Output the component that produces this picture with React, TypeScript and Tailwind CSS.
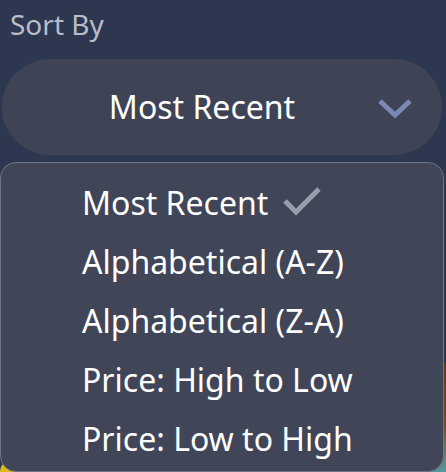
import { useState } from 'react';

const options = [
  'Most Recent',
  'Alphabetical (A-Z)',
  'Alphabetical (Z-A)',
  'Price: High to Low',
  'Price: Low to High',
];

function ChevronDown() {
  return (
    <svg width="36" height="22" viewBox="0 0 36 22" fill="none">
      <path d="M3 4 L18 18 L33 4" stroke="#7b87b4" strokeWidth="5" strokeLinejoin="miter" />
    </svg>
  );
}

function Check() {
  return (
    <svg width="40" height="30" viewBox="0 0 40 30" fill="none">
      <path d="M3 15 L14 26 L37 3" stroke="#9a9eac" strokeWidth="5" />
    </svg>
  );
}

export default function App() {
  const [selected] = useState('Most Recent');

  return (
    <div className="relative w-[446px] h-[472px] overflow-hidden bg-[#2e3750] font-['Noto_Sans',sans-serif]">
      {/* Sort label + trigger */}
      <div className="pt-[5px]">
        <p className="pl-[10px] text-[28px] leading-[38px] text-[#b9bdc9]">Sort By</p>
        <button className="mt-[16px] ml-[2px] w-[440px] h-[96px] rounded-full bg-[#3e4456] flex items-center relative">
          <span className="flex-1 text-center text-[32px] text-white pr-[40px]">{selected}</span>
          <span className="absolute right-[29px] top-[38px]">
            <ChevronDown />
          </span>
        </button>
      </div>

      {/* Listing cards beneath the menu */}
      <div className="mt-[208px] flex gap-[8px]">
        <div className="flex-1 flex flex-col">
          <div className="h-[97px]" />
          <div className="h-[40px] bg-gradient-to-b from-[#e5c21a] to-[#caa418] rounded-tl-[12px]" />
        </div>
        <div className="flex-1 h-[120px] bg-gradient-to-b from-[#5b3d22] via-[#6b4c2c] to-[#3fa9b8]" />
      </div>

      {/* Dropdown menu */}
      <div className="absolute left-0 top-[162px] w-[444px] h-[310px] rounded-[16px] border-[1.5px] border-[#6e7489] bg-[#404558] pt-[10px]">
        {options.map((o) => (
          <div key={o} className="h-[59px] flex items-center pl-[81px] text-[32px] text-white">
            <span>{o}</span>
            {o === selected && (
              <span className="ml-[14px] mt-[-4px]">
                <Check />
              </span>
            )}
          </div>
        ))}
      </div>
    </div>
  );
}
